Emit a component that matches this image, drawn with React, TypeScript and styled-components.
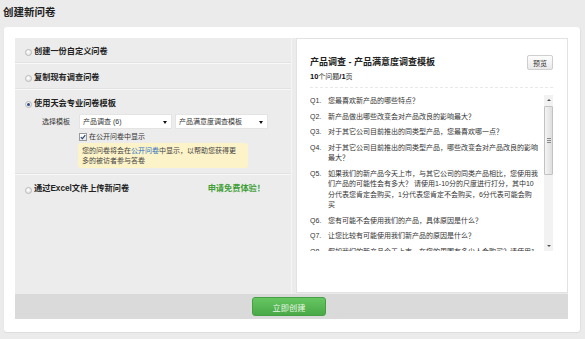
import React from 'react';
import styled, { createGlobalStyle } from 'styled-components';

const GlobalStyle = createGlobalStyle`
  html, body {
    margin: 0;
    padding: 0;
    background: #ebebeb;
  }
  body {
    font-family: 'Liberation Sans', 'Noto Sans CJK SC', sans-serif;
    color: #333;
  }
  * {
    box-sizing: border-box;
  }
`;

const Page = styled.div`
  width: 585px;
  height: 339px;
  overflow: hidden;
`;

const Heading = styled.h1`
  margin: 0;
  padding: 6px 0 0 3px;
  height: 27px;
  font-size: 10.5px;
  line-height: 12px;
  font-weight: bold;
  color: #222;
`;

const Card = styled.div`
  margin-left: 4px;
  width: 576px;
  height: 305px;
  padding: 11px 12px 13px 11px;
  background: #fff;
  border-radius: 3px;
  box-shadow: 0 1px 1px rgba(0, 0, 0, 0.06), 1px 0 1px rgba(0, 0, 0, 0.04);
`;

const Frame = styled.div`
  display: flex;
  flex-direction: column;
  height: 100%;
  background: #ececec;
`;

const Main = styled.div`
  flex: 1;
  display: flex;
  min-height: 0;
`;

const Options = styled.div`
  width: 277px;
  border-right: 1px solid #f5f5f5;
  display: flex;
  flex-direction: column;
`;

const OptionRow = styled.div<{ $last?: boolean; $open?: boolean }>`
  padding: 9px 0 6px 10px;
  padding-bottom: ${(p) => (p.$last ? '0' : p.$open ? '6px' : '6px')};
  border-bottom: ${(p) => (p.$last ? 'none' : '1px solid #f8f8f8')};
  box-shadow: ${(p) => (p.$last ? 'none' : 'inset 0 -2px 0 -1px #e2e2e2')};
  flex: ${(p) => (p.$last ? 1 : 'none')};
`;

const OptionLabel = styled.div`
  display: flex;
  align-items: center;
  padding-right: 26px;
  font-size: 8.2px;
  line-height: 10px;
  font-weight: bold;
  color: #222;
`;

const Radio = styled.span<{ $checked?: boolean; $low?: boolean }>`
  position: relative;
  width: 7px;
  height: 7px;
  margin-right: 2px;
  margin-top: ${(p) => (p.$low ? '3px' : '0')};
  border-radius: 50%;
  border: 1px solid #b9b9b9;
  background: radial-gradient(circle at 40% 35%, #fff, #dcdcdc);
  flex: none;

  &::after {
    content: '';
    display: ${(p) => (p.$checked ? 'block' : 'none')};
    position: absolute;
    left: 1px;
    top: 1px;
    width: 3px;
    height: 3px;
    border-radius: 50%;
    background: #2a4c86;
  }
`;

const Promo = styled.span`
  margin-left: auto;
  color: #3f9f36;
`;

const Sub = styled.div`
  margin: 5px 0 0 17px;
  font-size: 7px;
  line-height: 10px;
  color: #333;
`;

const SelectRow = styled.div`
  display: flex;
  align-items: center;
`;

const FieldLabel = styled.span`
  width: 37px;
`;

const Select = styled.div`
  position: relative;
  width: 93px;
  height: 15px;
  margin-right: 3px;
  padding-left: 3px;
  background: #fff;
  border: 1px solid #e4e4e4;
  line-height: 13px;
  color: #333;

  &::after {
    content: '';
    position: absolute;
    right: 4px;
    top: 6px;
    border-left: 2px solid transparent;
    border-right: 2px solid transparent;
    border-top: 3px solid #111;
  }
`;

const CheckRow = styled.label`
  display: flex;
  align-items: center;
  gap: 2px;
  margin: 3px 0 0 37px;
`;

const Box = styled.span`
  display: flex;
  align-items: center;
  justify-content: center;
  width: 8px;
  height: 8px;
  border: 1px solid #9a9a9a;
  background: linear-gradient(#fff, #e4e9ef);
`;

const Note = styled.div`
  width: 170px;
  margin: 1px 0 0 36px;
  padding: 3px 8px 3px 4px;
  background: #fcf3c8;
  border-radius: 3px;
  line-height: 9.5px;
  color: #444;
`;

const Link = styled.span`
  color: #2a6ec2;
`;

const Preview = styled.div`
  flex: 1;
  margin-left: 4px;
  margin-bottom: 1px;
  display: flex;
  flex-direction: column;
  padding: 17px 14px 0 13px;
  background: #fff;
  border: 1px solid #e2e2e2;
  min-width: 0;
`;

const PreviewHead = styled.div`
  display: flex;
  justify-content: space-between;
  align-items: flex-start;
`;

const TemplateTitle = styled.div`
  font-size: 9px;
  line-height: 12px;
  font-weight: bold;
  color: #222;
`;

const Meta = styled.div`
  margin-top: 4px;
  font-size: 7px;
  line-height: 10px;
  color: #333;

  b {
    font-size: 7.5px;
    color: #111;
  }
`;

const PreviewButton = styled.button`
  margin-top: -1px;
  width: 26px;
  height: 15px;
  padding: 0;
  border: 1px solid #cfcfcf;
  border-radius: 2px;
  background: linear-gradient(#fdfdfd, #e9e9e9);
  font-family: inherit;
  font-size: 7px;
  color: #333;
`;

const Divider = styled.div`
  margin-top: 5px;
  border-top: 1px dashed #e8e8e8;
`;

const QuestionArea = styled.div`
  display: flex;
  justify-content: space-between;
  height: 156px;
  margin-top: 7px;
`;

const QuestionList = styled.ol`
  margin: 0;
  padding: 1px 0 0;
  list-style: none;
  overflow: hidden;
  font-size: 7px;
  line-height: 10.5px;
  color: #333;
`;

const Question = styled.li`
  display: flex;
  margin-bottom: 5px;
`;

const QNum = styled.span`
  width: 18px;
  flex: none;
`;

const QText = styled.span`
  width: 210.4px;
`;

const Scrollbar = styled.div`
  width: 9px;
  display: flex;
  flex-direction: column;
  background: #f2f2f2;
`;

const ScrollArrow = styled.div<{ $down?: boolean }>`
  height: 10px;
  display: flex;
  align-items: center;
  justify-content: center;
  margin-top: ${(p) => (p.$down ? 'auto' : '0')};

  &::before {
    content: '';
    border-left: 2px solid transparent;
    border-right: 2px solid transparent;
    border-bottom: ${(p) => (p.$down ? 'none' : '2px solid #555')};
    border-top: ${(p) => (p.$down ? '2px solid #555' : 'none')};
  }
`;

const Thumb = styled.div`
  height: 69px;
  margin: 1px 0 0;
  border: 1px solid #c2c2c2;
  border-radius: 1px;
  background: linear-gradient(to right, #f4f4f4, #dedede);
  display: flex;
  flex-direction: column;
  align-items: center;
  justify-content: center;
  gap: 1px;

  span {
    width: 4px;
    height: 1px;
    background: #8a8a8a;
  }
`;

const Footer = styled.div`
  height: 25px;
  display: flex;
  align-items: center;
  justify-content: center;
  background: #dadada;
  padding-right: 5px;
`;

const CreateButton = styled.button`
  width: 74px;
  height: 19px;
  padding: 0;
  border: 1px solid #45a043;
  border-radius: 3px;
  background: linear-gradient(#66c662, #4aa947);
  font-family: inherit;
  font-size: 8.2px;
  color: #e9f7e6;
`;

const questions = [
  '您最喜欢新产品的哪些特点？',
  '新产品做出哪些改变会对产品改良的影响最大？',
  '对于其它公司目前推出的同类型产品，您最喜欢哪一点？',
  '对于其它公司目前推出的同类型产品，哪些改变会对产品改良的影响最大？',
  '如果我们的新产品今天上市，与其它公司的同类产品相比，您使用我们产品的可能性会有多大？ 请使用1-10分的尺度进行打分，其中10分代表您肯定会购买，1分代表您肯定不会购买，6分代表可能会购买',
  '您有可能不会使用我们的产品，具体原因是什么？',
  '让您比较有可能使用我们新产品的原因是什么？',
  '假如我们的新产品今天上市，在您的周围有多少人会购买？请使用1-10分的尺度',
];

export default function App() {
  return (
    <Page>
      <GlobalStyle />
      <Heading>创建新问卷</Heading>
      <Card>
        <Frame>
          <Main>
            <Options>
              <OptionRow>
                <OptionLabel>
                  <Radio />
                  创建一份自定义问卷
                </OptionLabel>
              </OptionRow>
              <OptionRow>
                <OptionLabel>
                  <Radio />
                  复制现有调查问卷
                </OptionLabel>
              </OptionRow>
              <OptionRow $open>
                <OptionLabel>
                  <Radio $checked />
                  使用天会专业问卷模板
                </OptionLabel>
                <Sub>
                  <SelectRow>
                    <FieldLabel>选择模板</FieldLabel>
                    <Select>产品调查 (6)</Select>
                    <Select>产品满意度调查模板</Select>
                  </SelectRow>
                  <CheckRow>
                    <Box>
                      <svg width="6" height="6" viewBox="0 0 6 6">
                        <path d="M0.8 3.1 L2.4 4.6 L5.3 1.2" fill="none" stroke="#2b3f66" strokeWidth="1.1" />
                      </svg>
                    </Box>
                    在公开问卷中显示
                  </CheckRow>
                  <Note>
                    您的问卷将会在<Link>公开问卷</Link>中显示，以帮助您获得更多的被访者参与答卷
                  </Note>
                </Sub>
              </OptionRow>
              <OptionRow $last>
                <OptionLabel>
                  <Radio $low />
                  通过Excel文件上传新问卷
                  <Promo>申请免费体验！</Promo>
                </OptionLabel>
              </OptionRow>
            </Options>
            <Preview>
              <PreviewHead>
                <div>
                  <TemplateTitle>产品调查 - 产品满意度调查模板</TemplateTitle>
                  <Meta>
                    <b>10</b>个问题<b>/1</b>页
                  </Meta>
                </div>
                <PreviewButton>预览</PreviewButton>
              </PreviewHead>
              <Divider />
              <QuestionArea>
                <QuestionList>
                  {questions.map((q, i) => (
                    <Question key={i}>
                      <QNum>Q{i + 1}.</QNum>
                      <QText>{q}</QText>
                    </Question>
                  ))}
                </QuestionList>
                <Scrollbar>
                  <ScrollArrow />
                  <Thumb>
                    <span />
                    <span />
                    <span />
                  </Thumb>
                  <ScrollArrow $down />
                </Scrollbar>
              </QuestionArea>
            </Preview>
          </Main>
          <Footer>
            <CreateButton>立即创建</CreateButton>
          </Footer>
        </Frame>
      </Card>
    </Page>
  );
}
